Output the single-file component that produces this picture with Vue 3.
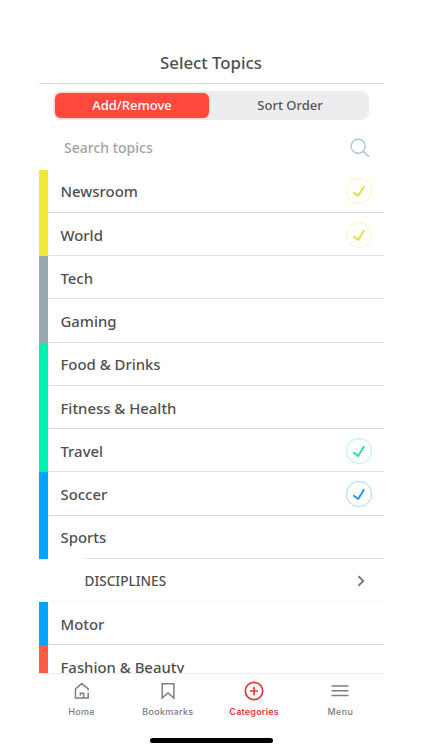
<template>
    <div class="screen">
        <header class="header">
            <h1 class="header__title">Select Topics</h1>
        </header>
        <div class="switch">
            <button v-for="tab in modes" :key="tab" class="switch__button" :class="{ switch__active: mode === tab }"
                @click="mode = tab">{{ tab }}</button>
        </div>
        <label class="search">
            <input v-model="search" class="search__input" type="text" placeholder="Search topics">
            <svg class="search__icon" viewBox="0 0 20 20">
                <circle cx="8.2" cy="8.2" r="7" />
                <path d="M13.2 13.2L19 19" />
            </svg>
        </label>
        <ul class="list">
            <li v-for="topic in filtered" :key="topic.name" class="topic" :class="{ topic__sub: topic.sub }"
                @click="toggle(topic)">
                <span class="topic__bar" :style="{ backgroundColor: topic.color }"></span>
                <div class="topic__body" :class="{ topic__indent: topic.indent }">
                    <span class="topic__name">{{ topic.name }}</span>
                    <svg v-if="topic.sub" class="topic__arrow" viewBox="0 0 8 12">
                        <path d="M1.4 1.2L6.2 6L1.4 10.8" />
                    </svg>
                    <svg v-else-if="topic.checked" class="topic__check" viewBox="0 0 28 28">
                        <circle cx="14" cy="14" r="12.5" :stroke="topic.ring" />
                        <path d="M8.2 15.2L13.2 18.9L19.2 9.2" :stroke="topic.mark" />
                    </svg>
                </div>
            </li>
        </ul>
        <nav class="nav">
            <a class="nav__item">
                <svg class="nav__icon" viewBox="0 0 22 22">
                    <path d="M17.2 10.4V8.9L10.8 3.6L4.5 8.9V18H17.2V12.4M9.3 15.8V13.2H12.6V18" />
                </svg>
                <span>Home</span>
            </a>
            <a class="nav__item">
                <svg class="nav__icon" viewBox="0 0 22 22">
                    <path d="M5.2 3.7H16.9V18L11 12.8L5.2 18Z" />
                </svg>
                <span>Bookmarks</span>
            </a>
            <a class="nav__item nav__current">
                <svg class="nav__icon" viewBox="0 0 22 22">
                    <circle cx="11" cy="11" r="8.7" />
                    <path d="M6.8 11H15.2M11 6.8V15.2" />
                </svg>
                <span>Categories</span>
            </a>
            <a class="nav__item">
                <svg class="nav__icon" viewBox="0 0 22 22">
                    <path d="M2.5 6.1H19.5M2.5 10.8H19.5M2.5 15.5H19.5" />
                </svg>
                <span>Menu</span>
            </a>
        </nav>
        <div class="indicator"></div>
    </div>
</template>

<script setup>
import { ref, computed } from 'vue'

const modes = ['Add/Remove', 'Sort Order']
const mode = ref('Add/Remove')
const search = ref('')

const topics = ref([
    { name: 'Newsroom', color: '#f0e936', checked: true, ring: '#fbfacb', mark: '#e3dc3c' },
    { name: 'World', color: '#f0e936', checked: true, ring: '#fbfacb', mark: '#e3dc3c' },
    { name: 'Tech', color: '#98a9b1' },
    { name: 'Gaming', color: '#98a9b1' },
    { name: 'Food & Drinks', color: '#00f2b2' },
    { name: 'Fitness & Health', color: '#00f2b2' },
    { name: 'Travel', color: '#00f2b2', checked: true, ring: '#c3f8e9', mark: '#25d9aa' },
    { name: 'Soccer', color: '#00a5ff', checked: true, ring: '#bfe2f8', mark: '#2196dc' },
    { name: 'Sports', color: '#00a5ff', indent: true },
    { name: 'DISCIPLINES', color: 'transparent', sub: true },
    { name: 'Motor', color: '#00a5ff' },
    { name: 'Fashion & Beauty', color: '#ff5a43' }
])

const filtered = computed(() =>
    topics.value.filter((t) => t.name.toLowerCase().includes(search.value.toLowerCase()))
)

function toggle(topic) {
    if (topic.sub) return
    topic.checked = !topic.checked
    topic.ring = topic.ring || topic.color
    topic.mark = topic.mark || topic.color
}
</script>

<style>
body {
    margin: 0;
    background: #fff;
}
</style>

<style scoped>
.screen {
    box-sizing: border-box;
    display: flex;
    flex-direction: column;
    width: 345px;
    height: 750px;
    margin: 0 auto;
    padding-top: 42px;
    overflow: hidden;
    color: #505050;
    font-family: "Noto Sans", "Open Sans", sans-serif;
}

.header {
    box-sizing: border-box;
    height: 42px;
    flex: none;
    border-bottom: 1px solid #dfdfdf;
}

.header__title {
    margin: 0;
    font-size: 16.8px;
    font-weight: 500;
    line-height: 41px;
    text-align: center;
}

.switch {
    box-sizing: border-box;
    display: flex;
    flex: none;
    height: 29px;
    margin: 7px 14.5px 0;
    padding: 2px;
    border-radius: 8px;
    background: #ededef;
}

.switch__button {
    flex: 1;
    padding: 0 0 0 4px;
    border: none;
    border-radius: 6px;
    background: transparent;
    color: #555;
    font: 500 13px/25px "Noto Sans", "Open Sans", sans-serif;
}

.switch__button:first-child {
    flex: none;
    width: 154px;
    padding: 0;
}

.switch__active {
    background: #ff493c;
    color: #fff;
    box-shadow: 0 0 2px rgba(255, 73, 60, 0.5);
}

.search {
    display: flex;
    flex: none;
    align-items: center;
    height: 49.5px;
    padding: 0 14px 0 25.5px;
}

.search__input {
    flex: 1;
    min-width: 0;
    padding: 0;
    border: none;
    outline: none;
    color: #4c4c4c;
    font: 500 14px/20px "Noto Sans", "Open Sans", sans-serif;
    margin-top: 7px;
}

.search__input::placeholder {
    color: #a3a3a3;
    opacity: 1;
}

.search__icon {
    width: 20px;
    height: 20px;
    margin-top: 6px;
    fill: none;
    stroke: #a9c5d2;
    stroke-width: 1.4;
}

.list {
    flex: 1;
    min-height: 0;
    margin: 0;
    padding: 0;
    overflow: hidden;
    list-style: none;
}

.topic {
    display: flex;
    height: 43.25px;
}

.topic__bar {
    flex: none;
    width: 9.5px;
}

.topic__body {
    box-sizing: border-box;
    display: flex;
    flex: 1;
    align-items: center;
    justify-content: space-between;
    padding: 1.5px 11px 0 12.5px;
    border-bottom: 1px solid #dfdfdf;
}

.topic__name {
    font-size: 14.9px;
    font-weight: 500;
    line-height: 20px;
}

/* the divider before a nested row starts at the nested text */
.topic__indent {
    margin-left: 36.5px;
    padding-left: 0;
}

.topic__indent .topic__name {
    margin-left: -24px;
}

.topic__sub .topic__body {
    padding-right: 19px;
    padding-left: 36.5px;
    border-color: #f5f5f5;
}

.topic__sub .topic__name {
    font-size: 13.6px;
    font-weight: 500;
}

.topic__arrow {
    width: 8px;
    height: 12px;
    fill: none;
    stroke: #777;
    stroke-width: 1.9;
}

.topic__check {
    width: 28px;
    height: 28px;
    fill: none;
    stroke-width: 1.3;
}

.topic__check path {
    stroke-width: 1.9;
}

.nav {
    box-sizing: border-box;
    display: grid;
    grid-template-columns: repeat(4, 1fr);
    flex: none;
    height: 64.5px;
    border-top: 1px solid #ececec;
}

.nav__item {
    display: flex;
    flex-direction: column;
    align-items: center;
    padding-top: 6px;
    color: #7a7a7a;
    font: 500 9px/12px Inter, sans-serif;
    letter-spacing: 0.3px;
}

.nav__icon {
    width: 22px;
    height: 22px;
    margin-bottom: 4px;
    fill: none;
    stroke: #7f7f7f;
    stroke-width: 1.5;
}

.nav__current {
    color: #e5393b;
    font-weight: 600;
    letter-spacing: 0.2px;
}

.nav__current .nav__icon {
    stroke: #e5393b;
    stroke-width: 1.7;
}

.indicator {
    flex: none;
    width: 123px;
    height: 5px;
    margin: 0 auto 7.5px;
    border-radius: 3px;
    background: #000;
}
</style>
